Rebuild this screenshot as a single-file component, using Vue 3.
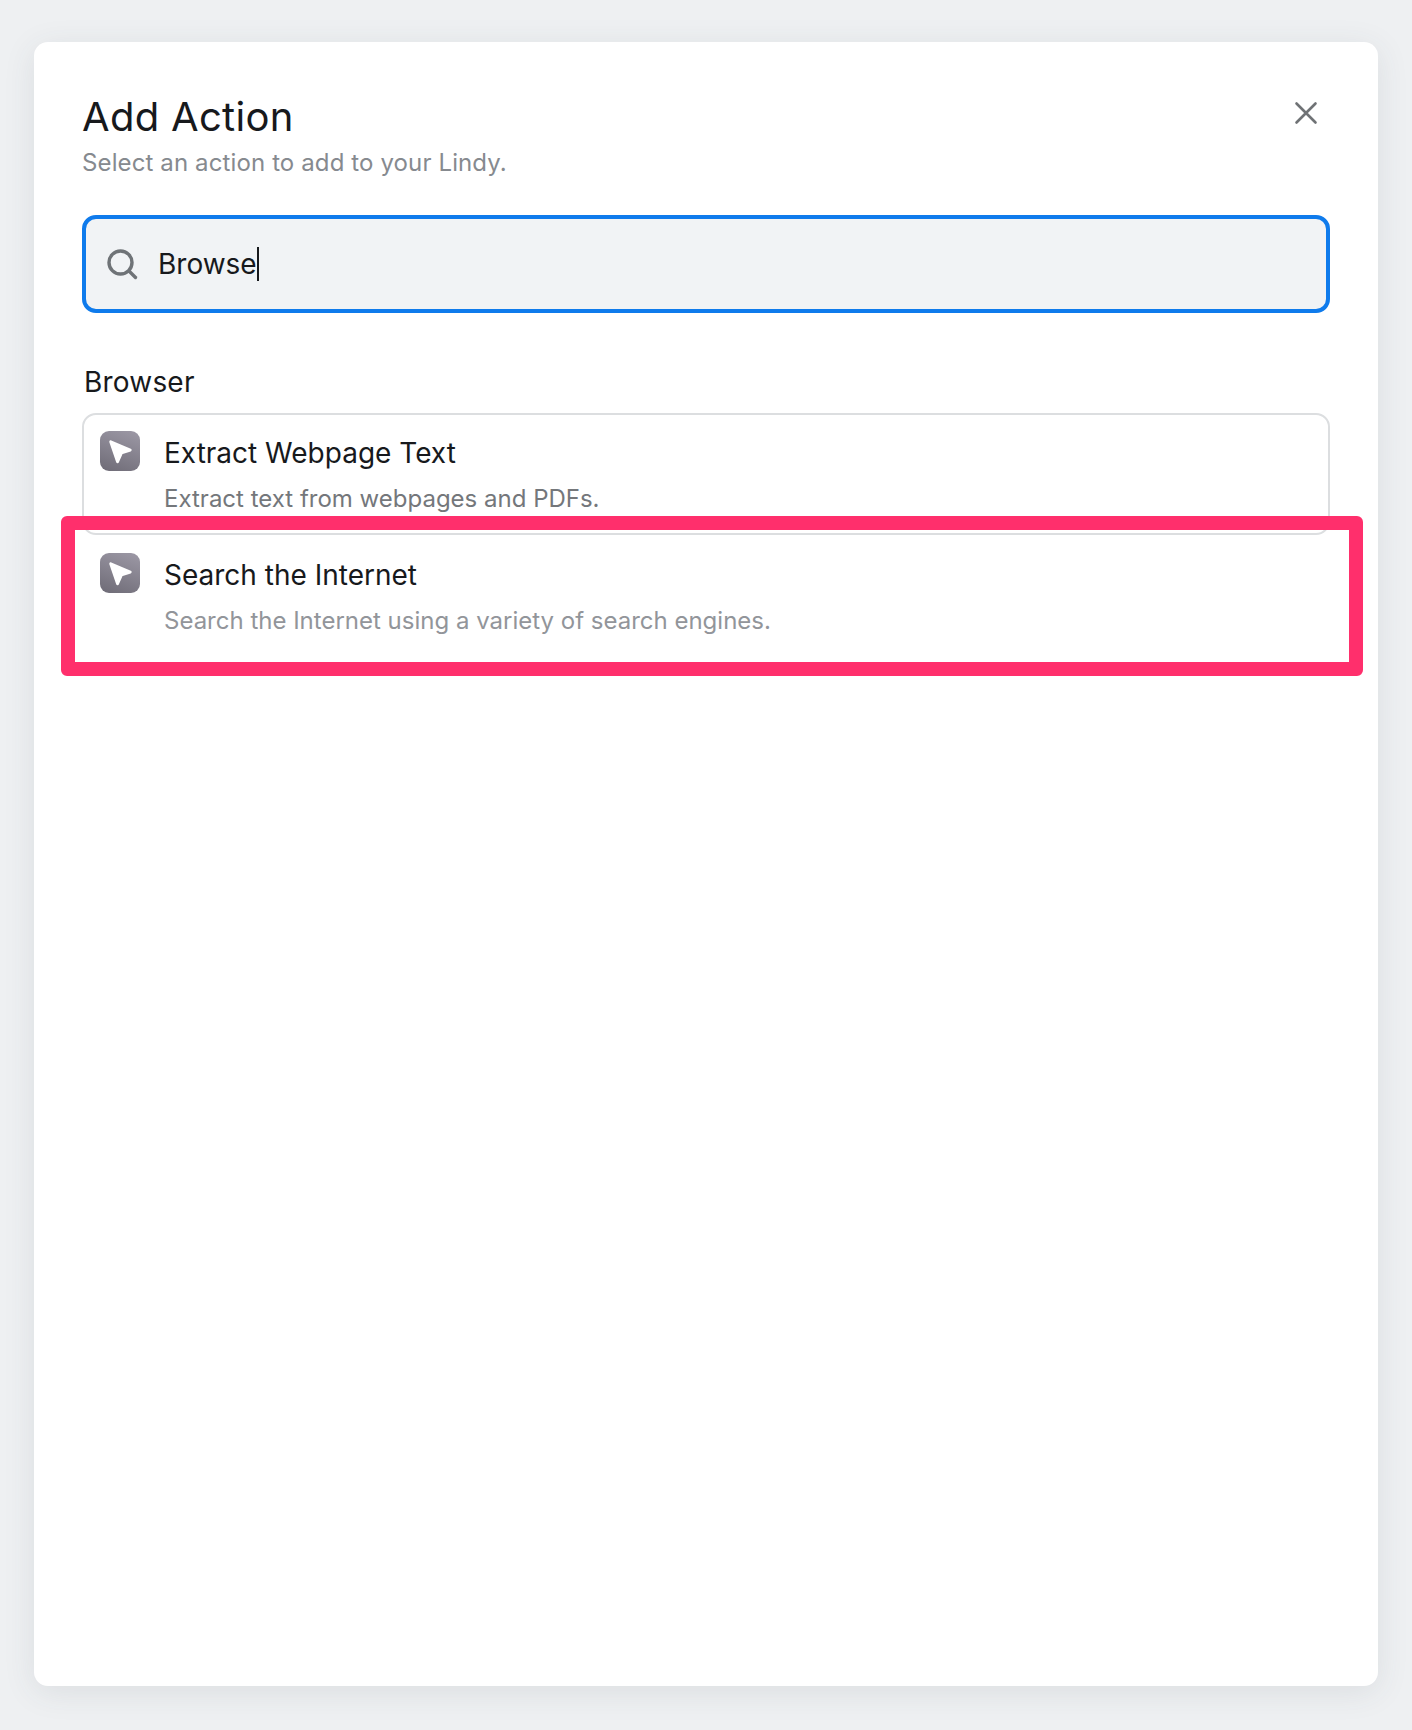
<script setup>
const actions = [
  { id: 'extract', title: 'Extract Webpage Text', desc: 'Extract text from webpages and PDFs.' },
  { id: 'search', title: 'Search the Internet', desc: 'Search the Internet using a variety of search engines.', marked: true }
]
</script>

<template>
  <div class="page">
    <section class="modal">
      <header class="head">
        <div>
          <h1 class="title">Add Action</h1>
          <p class="sub">Select an action to add to your Lindy.</p>
        </div>
        <svg class="close" viewBox="0 0 24 24" width="24" height="24" fill="none" stroke="#6f7275" stroke-width="2.6" stroke-linecap="round">
          <path d="M2.5 2.5 21.5 21.5M21.5 2.5 2.5 21.5" />
        </svg>
      </header>

      <div class="search">
        <svg viewBox="0 0 32 32" width="32" height="32" fill="none" stroke="#6f7377" stroke-width="3.4" stroke-linecap="round">
          <circle cx="14.5" cy="14.5" r="11.5" />
          <path d="M23 23 29.5 29.5" />
        </svg>
        <span class="query">Browse<i class="caret"></i></span>
      </div>

      <h2 class="group">Browser</h2>

      <ul class="list">
        <li v-for="a in actions" :key="a.id" class="item" :class="{ plain: a.marked }">
          <span class="badge">
            <svg viewBox="0 0 41 41" width="40" height="40">
              <path d="M11 11 31 19.5 22 22.5 18 31.5Z" fill="#fff" stroke="#fff" stroke-width="3" stroke-linejoin="round" />
            </svg>
          </span>
          <div class="copy">
            <div class="name">{{ a.title }}</div>
            <div class="desc" :class="{ light: a.marked }">{{ a.desc }}</div>
          </div>
          <div v-if="a.marked" class="marker"></div>
        </li>
      </ul>
    </section>
  </div>
</template>

<style>
html, body { margin: 0; background: #eef0f2; }
</style>

<style scoped>
.page {
  width: 1412px;
  height: 1730px;
  box-sizing: border-box;
  padding: 42px 34px 44px;
  background: #eef0f2;
  font-family: Inter, "Liberation Sans", sans-serif;
  overflow: hidden;
}
.modal {
  height: 100%;
  box-sizing: border-box;
  padding: 51px 48px 0;
  background: #fff;
  border-radius: 14px;
  box-shadow: 0 6px 32px rgba(60, 66, 75, 0.1);
}
.head {
  display: flex;
  justify-content: space-between;
  align-items: flex-start;
}
.title {
  margin: 0;
  font-size: 40px;
  line-height: 48px;
  font-weight: 400;
  letter-spacing: 0.3px;
  color: #17191c;
}
.sub {
  margin: 6px 0 0;
  font-size: 24px;
  line-height: 32px;
  letter-spacing: 0.12px;
  color: #868a8f;
}
.close { margin: 8px 12px 0 0; }
.search {
  margin-top: 36px;
  height: 98px;
  box-sizing: border-box;
  display: flex;
  align-items: center;
  gap: 20px;
  padding: 0 20px;
  background: #f1f3f5;
  border: 4px solid #0f7bec;
  border-radius: 14px;
}
.query {
  font-size: 28px;
  color: #17191c;
}
.caret {
  display: inline-block;
  width: 2px;
  height: 34px;
  background: #17191c;
  vertical-align: -7px;
}
.group {
  margin: 50px 0 0 2px;
  font-size: 28px;
  line-height: 38px;
  font-weight: 400;
  letter-spacing: 0.2px;
  color: #17191c;
}
.list {
  list-style: none;
  margin: 12px 0 0;
  padding: 0;
}
.item {
  position: relative;
  display: flex;
  gap: 24px;
  height: 122px;
  box-sizing: border-box;
  padding: 16px 16px 0;
  border: 2px solid #dcdee0;
  border-radius: 14px;
}
.item.plain {
  border-color: transparent;
}
.badge {
  flex: none;
  width: 40px;
  height: 40px;
  border-radius: 9px;
  background: linear-gradient(200deg, #9d99a6, #6e6b76);
}
.badge svg { display: block; }
.name {
  margin-top: 2px;
  font-size: 28px;
  line-height: 40px;
  color: #17191c;
}
.desc {
  margin-top: 9px;
  font-size: 24px;
  line-height: 34px;
  color: #74777b;
}
.desc.light { color: #92959a; }
.marker {
  position: absolute;
  left: -23px;
  right: -35px;
  top: -21px;
  height: 160px;
  box-sizing: border-box;
  border: 14px solid #ff2f6c;
  border-radius: 6px;
  pointer-events: none;
}
</style>
